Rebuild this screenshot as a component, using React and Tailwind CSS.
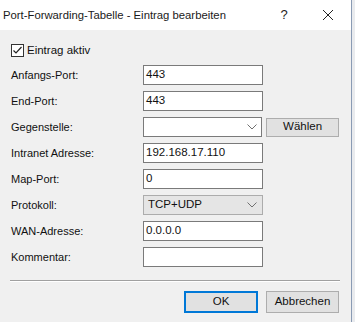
import React from "react";

const font = { fontFamily: '"Liberation Sans", Arial, sans-serif' };

function Chevron() {
  return (
    <svg width="10" height="6" viewBox="0 0 10 6" className="shrink-0">
      <path d="M0.5 0.5 L5 5 L9.5 0.5" fill="none" stroke="#707070" strokeWidth="1" />
    </svg>
  );
}

function Input({ value }) {
  return (
    <div className="w-[120px] h-[20px] border border-[#7a7a7a] bg-white flex items-center pl-[2px] text-[11.5px] text-[#111]">
      {value}
    </div>
  );
}

function Row({ label, children }) {
  return (
    <div className="flex items-center h-[20px]">
      <div className="w-[132px] text-[11px] text-[#111]">{label}</div>
      {children}
    </div>
  );
}

export default function App() {
  return (
    <div className="w-[355px] h-[322px] flex bg-[#e9ebee] text-[#111]" style={font}>
      <div className="w-[352px] h-[322px] flex flex-col bg-[#f0f0f0] border-r border-[#8a9bb4]">
        <div className="h-[30px] bg-white flex items-center shrink-0">
          <div className="pl-[3px] text-[11.3px] text-[#1a1a1a] flex-1">Port-Forwarding-Tabelle - Eintrag bearbeiten</div>
          <div className="w-[20px] text-[13px] text-[#222] mr-[28px] text-center">?</div>
          <svg width="12" height="12" viewBox="0 0 12 12" className="mr-[17px]">
            <path d="M1 1 L11 11 M11 1 L1 11" stroke="#222" strokeWidth="1" />
          </svg>
        </div>
        <div className="flex flex-col pl-[11px] pr-[12px]">
          <div className="flex items-center h-[13px] mt-[14px]">
            <div className="w-[13px] h-[13px] border border-[#333] bg-white flex items-center justify-center">
              <svg width="11" height="11" viewBox="0 0 11 11">
                <path d="M1.5 5.5 L4 8 L9.5 2" fill="none" stroke="#222" strokeWidth="1.2" />
              </svg>
            </div>
            <span className="ml-[3px] text-[11.5px]">Eintrag aktiv</span>
          </div>
          <div className="flex flex-col gap-[6px] mt-[8px]">
            <Row label="Anfangs-Port:"><Input value="443" /></Row>
            <Row label="End-Port:"><Input value="443" /></Row>
            <Row label="Gegenstelle:">
              <div className="w-[120px] h-[20px] border border-[#7a7a7a] bg-white flex items-center justify-end pr-[4px]">
                <Chevron />
              </div>
              <div className="ml-[4px] w-[73px] h-[19px] border border-[#adadad] bg-[#e1e1e1] flex items-center justify-center text-[11.5px]">
                Wählen
              </div>
            </Row>
            <Row label="Intranet Adresse:"><Input value="192.168.17.110" /></Row>
            <Row label="Map-Port:"><Input value="0" /></Row>
            <Row label="Protokoll:">
              <div className="w-[120px] h-[20px] border border-[#acacac] bg-[#e5e5e5] flex items-center justify-between pl-[4px] pr-[5px] text-[11.5px]">
                <span>TCP+UDP</span>
                <Chevron />
              </div>
            </Row>
            <Row label="WAN-Adresse:"><Input value="0.0.0.0" /></Row>
            <Row label="Kommentar:"><Input value="" /></Row>
          </div>
          <div className="mt-[13px] h-[2px] w-[330px] -ml-[1px] border-t border-[#a0a0a0] border-b border-b-white" />
          <div className="flex justify-end gap-[8px] mt-[9px]">
            <div className="w-[74px] h-[22px] border-2 border-[#0078d7] bg-[#e1e1e1] flex items-center justify-center text-[11.5px]">OK</div>
            <div className="w-[73px] h-[22px] border border-[#adadad] bg-[#e1e1e1] flex items-center justify-center text-[11.5px]">Abbrechen</div>
          </div>
        </div>
      </div>
    </div>
  );
}
